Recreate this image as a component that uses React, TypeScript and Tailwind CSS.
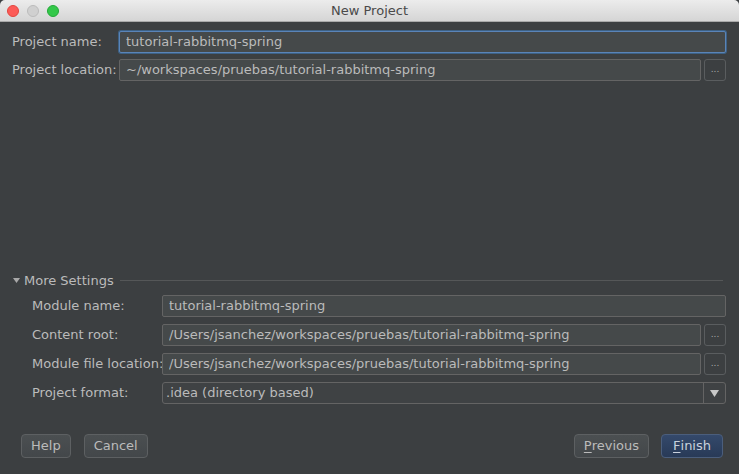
const font = { fontFamily: '"DejaVu Sans", "Liberation Sans", sans-serif' };

function Field({ value, focused = false }: { value: string; focused?: boolean }) {
    return (
        <div
            className={`flex-1 h-[22px] flex items-center px-[6px] bg-[#45494a] text-[#bbbbbb] rounded-[2px] ${
                focused ? 'border border-[#5a84b8] ring-1 ring-[#3d6185]' : 'border border-[#646464]'
            }`}
        >
            <span className="truncate">{value}</span>
        </div>
    );
}

function Browse() {
    return (
        <div className="w-[22px] h-[22px] ml-[3px] border border-[#5a5d5f] rounded-[3px] flex items-center justify-center text-[#aaaaaa] text-[9px] leading-none pb-[2px]">
            ...
        </div>
    );
}

function Row({ label, children, labelWidth }: { label: string; children: React.ReactNode; labelWidth: string }) {
    return (
        <div className="flex items-center">
            <div className={`${labelWidth} shrink-0 whitespace-nowrap text-[#bbbbbb]`}>{label}</div>
            <div className="flex-1 flex items-center">{children}</div>
        </div>
    );
}

function Button({ children, primary = false }: { children: React.ReactNode; primary?: boolean }) {
    return (
        <div
            className={`h-[24px] flex items-center rounded-[4px] border ${
                primary
                    ? 'px-[11px] bg-gradient-to-b from-[#34496b] to-[#283a57] border-[#4b5e7c] text-[#c9d1dd]'
                    : 'px-[9px] bg-gradient-to-b from-[#4b4f51] to-[#43474a] border-[#5d6062] text-[#bbbbbb]'
            }`}
        >
            {children}
        </div>
    );
}

export default function App() {
    return (
        <div className="w-[739px] h-[474px] flex flex-col bg-[#3c3f41] text-[13px] overflow-hidden" style={font}>
            {/* Title bar */}
            <div className="h-[22px] shrink-0 relative flex items-center justify-center bg-gradient-to-b from-[#ececec] to-[#d5d5d5] border-b border-[#a9a9a9] rounded-t-[5px]">
                <div className="absolute left-[7px] top-[5px] flex gap-[8px]">
                    <div className="w-[12px] h-[12px] rounded-full bg-[#fc5b57] border border-[#e2463f]" />
                    <div className="w-[12px] h-[12px] rounded-full bg-[#d0d0d0] border border-[#bcbcbc]" />
                    <div className="w-[12px] h-[12px] rounded-full bg-[#34c84a] border border-[#24a938]" />
                </div>
                <span className="text-[#4a4a4a] text-[13px]">New Project</span>
            </div>

            <div className="flex-1 flex flex-col pl-[12px] pr-[13px]">
                <div className="flex flex-col gap-[6px] pt-[9px]">
                    <Row label="Project name:" labelWidth="w-[107px]">
                        <Field value="tutorial-rabbitmq-spring" focused />
                    </Row>
                    <Row label="Project location:" labelWidth="w-[107px]">
                        <Field value="~/workspaces/pruebas/tutorial-rabbitmq-spring" />
                        <Browse />
                    </Row>
                </div>

                <div className="flex-1" />

                {/* More Settings */}
                <div className="flex items-center text-[#bbbbbb] mb-[5px]">
                    <svg width="7" height="5" viewBox="0 0 7 5" className="ml-[1px] mr-[4px]">
                        <path d="M0 0 H7 L3.5 5 Z" fill="#a9a9a9" />
                    </svg>
                    <span>More Settings</span>
                    <div className="flex-1 h-px bg-[#555758] ml-[6px] mr-[3px]" />
                </div>

                <div className="flex flex-col gap-[7px] pl-[20px]">
                    <Row label="Module name:" labelWidth="w-[130px]">
                        <Field value="tutorial-rabbitmq-spring" />
                    </Row>
                    <Row label="Content root:" labelWidth="w-[130px]">
                        <Field value="/Users/jsanchez/workspaces/pruebas/tutorial-rabbitmq-spring" />
                        <Browse />
                    </Row>
                    <Row label="Module file location:" labelWidth="w-[130px]">
                        <Field value="/Users/jsanchez/workspaces/pruebas/tutorial-rabbitmq-spring" />
                        <Browse />
                    </Row>
                    <Row label="Project format:" labelWidth="w-[130px]">
                        <div className="flex-1 h-[22px] flex items-center bg-[#3f4244] border border-[#646464] rounded-[3px] text-[#bbbbbb]">
                            <span className="flex-1 px-[3px]">.idea (directory based)</span>
                            <div className="w-[22px] h-full border-l border-[#646464] flex items-center justify-center">
                                <svg width="9" height="7" viewBox="0 0 9 7">
                                    <path d="M0 0 H9 L4.5 7 Z" fill="#c8c8c8" />
                                </svg>
                            </div>
                        </div>
                    </Row>
                </div>

                {/* Buttons */}
                <div className="flex items-center pl-[9px] pr-[3px] pt-[30px] pb-[16px]">
                    <div className="flex gap-[13px]">
                        <Button>Help</Button>
                        <Button>Cancel</Button>
                    </div>
                    <div className="flex-1" />
                    <div className="flex gap-[12px]">
                        <Button>
                            <span className="underline underline-offset-2">P</span>revious
                        </Button>
                        <Button primary>
                            <span className="underline underline-offset-2">F</span>inish
                        </Button>
                    </div>
                </div>
            </div>
        </div>
    );
}
